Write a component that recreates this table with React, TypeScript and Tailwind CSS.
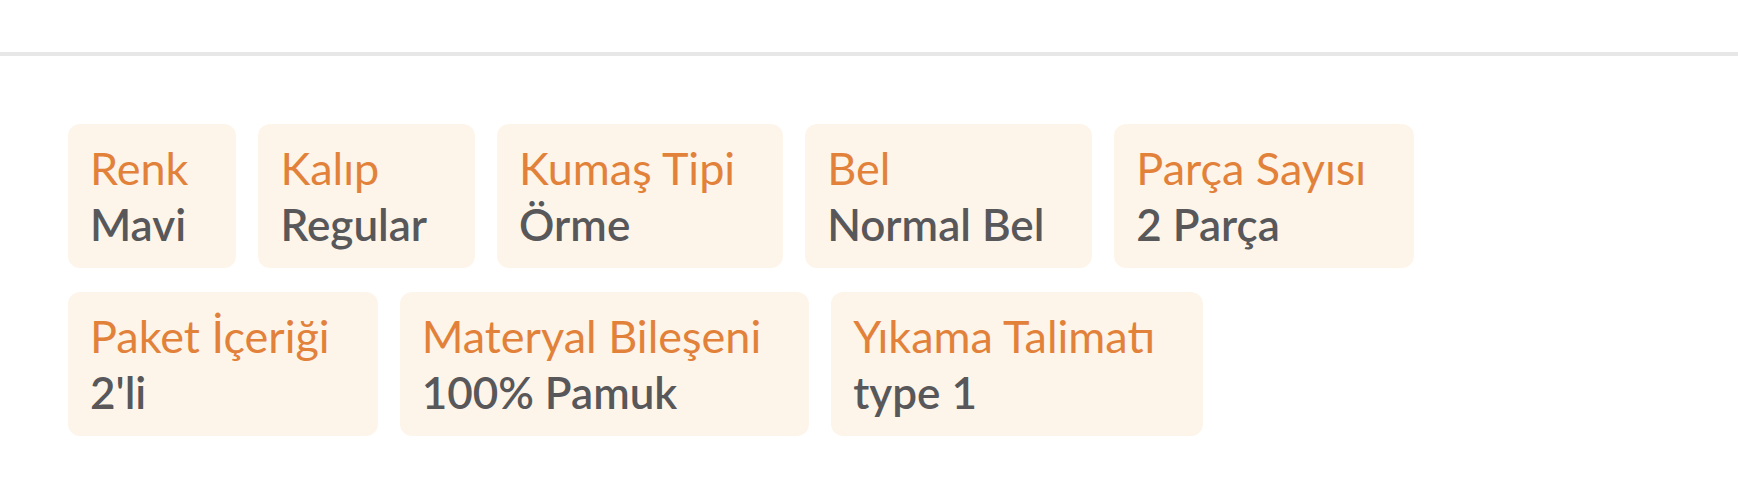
import React from "react";

const items: { label: string; value: string }[] = [
  { label: "Renk", value: "Mavi" },
  { label: "Kalıp", value: "Regular" },
  { label: "Kumaş Tipi", value: "Örme" },
  { label: "Bel", value: "Normal Bel" },
  { label: "Parça Sayısı", value: "2 Parça" },
  { label: "Paket İçeriği", value: "2'li" },
  { label: "Materyal Bileşeni", value: "100% Pamuk" },
  { label: "Yıkama Talimatı", value: "type 1" },
];

export default function App() {
  return (
    <div
      className="w-[1738px] h-[490px] bg-white overflow-hidden"
      style={{ fontFamily: "Lato, 'Noto Sans', sans-serif" }}
    >
      <div className="h-[52px]" />
      <div className="h-[4px] bg-[#e7e7e7]" />
      <div className="flex flex-wrap gap-x-[22px] gap-y-6 pl-[68px] pr-[68px] pt-[68px]">
        {items.map((it) => (
          <div
            key={it.label}
            className="flex flex-col rounded-xl bg-[#fef5ea] pl-[22px] pr-[48px] py-4"
          >
            <span className="text-[45px] leading-[56px] text-[#e2823a] whitespace-nowrap">
              {it.label}
            </span>
            <span className="text-[44px] leading-[56px] font-semibold text-[#58585a] whitespace-nowrap">
              {it.value}
            </span>
          </div>
        ))}
      </div>
    </div>
  );
}
